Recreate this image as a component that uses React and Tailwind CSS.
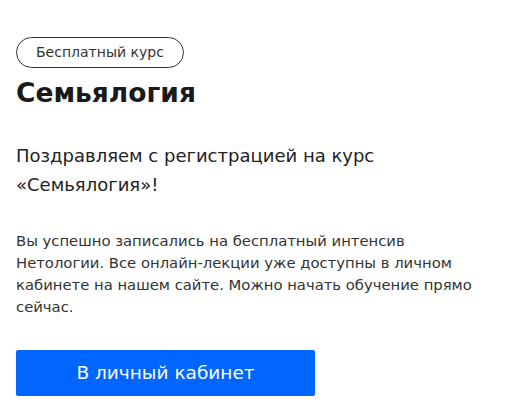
export default function App() {
  return (
    <div className="min-h-screen bg-white px-4 pt-[37px] text-[#222]" style={{ fontFamily: '"DejaVu Sans", Verdana, sans-serif' }}>
      <span className="inline-flex h-[31px] items-center rounded-full border border-[#333] px-[19px] text-[14px] text-[#333]">
        Бесплатный курс
      </span>
      <h1 className="mt-[9px] text-[26.5px] font-bold leading-[32px] text-[#1a1a1a]">Семьялогия</h1>
      <p className="mt-[32px] w-[420px] text-[18px] leading-[29px] text-[#222]">
        Поздравляем с регистрацией на курс «Семьялогия»!
      </p>
      <p className="mt-[31px] w-[475px] text-[14.8px] leading-[22px] text-[#333]">
        Вы успешно записались на бесплатный интенсив Нетологии. Все онлайн-лекции уже доступны в личном кабинете на нашем сайте. Можно начать обучение прямо сейчас.
      </p>
      <button type="button" className="mt-[32px] flex h-[46px] w-[299px] items-center justify-center rounded-[2px] bg-[#0066ff] text-[18.5px] text-white">
        В личный кабинет
      </button>
    </div>
  );
}
